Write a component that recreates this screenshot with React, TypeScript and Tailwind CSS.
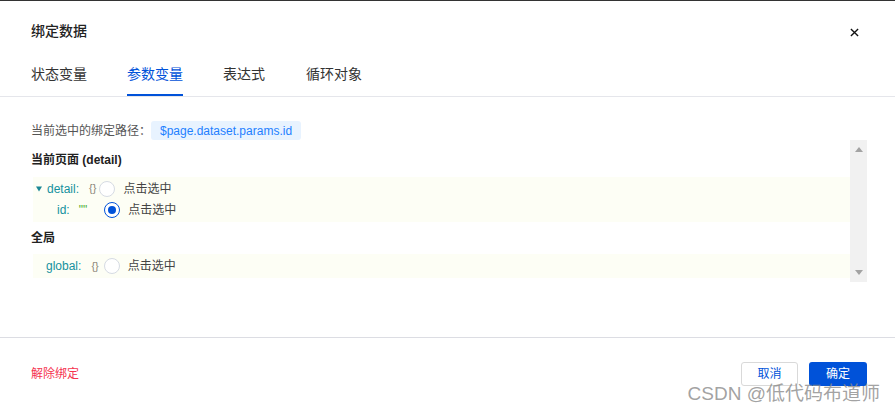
import React from "react";

const tabs = ["状态变量", "参数变量", "表达式", "循环对象"];

const Radio = ({ checked, className }: { checked?: boolean; className?: string }) => (
  <span
    className={`flex h-[16px] w-[16px] shrink-0 items-center justify-center rounded-full border bg-white ${
      checked ? "border-[#0052d9]" : "border-[#d6dbe3]"
    } ${className ?? ""}`}
  >
    {checked && <span className="h-[8px] w-[8px] rounded-full bg-[#0052d9]" />}
  </span>
);

const App = () => {
  return (
    <div
      className="relative h-[410px] w-[895px] overflow-hidden border-t border-[#333] bg-white text-[#333]"
      style={{ fontFamily: '"Liberation Sans", "Noto Sans CJK SC", sans-serif' }}
    >
      {/* header */}
      <div className="border-b border-[#e5e6eb] px-[31px]">
        <div className="flex h-[61px] items-center justify-between">
          <span className="text-[14px] font-medium text-[#222]">绑定数据</span>
          <svg width="9" height="9" viewBox="0 0 10 10" className="mr-[5px] mt-[1px]">
            <path d="M1 1L9 9M9 1L1 9" stroke="#111" strokeWidth="1.5" />
          </svg>
        </div>
        <div className="flex h-[34px] text-[14px] leading-[22px]">
          {tabs.map((t, i) => (
            <div
              key={t}
              className={`flex h-full flex-col justify-between pt-[1px] ${
                i === 1 ? "text-[#0052d9]" : "text-[#333]"
              } ${i === 2 ? "mr-[41px]" : "mr-[40px]"}`}
            >
              <span>{t}</span>
              <span className={`h-[2px] ${i === 1 ? "bg-[#0052d9]" : ""}`} />
            </div>
          ))}
        </div>
      </div>

      {/* body */}
      <div className="h-[240px] pl-[31px] pr-[28px] pt-[24px] text-[12px]">
        <div className="flex h-[19px] items-center">
          <span className="text-[#555]">当前选中的绑定路径：</span>
          <span className="flex h-[19px] w-[150px] items-center justify-center rounded-[3px] bg-[#e8f3ff] text-[12px] text-[#1e80ff]">
            $page.dataset.params.id
          </span>
        </div>

        <div className="flex h-[142px]">
          <div className="flex-1 pt-[11px]">
            <div className="h-[18px] font-bold leading-[18px] text-[#222]">当前页面 (detail)</div>
            <div className="ml-[2px] mt-[8px] h-[45px] bg-[#fdfef5] pl-[3px]">
              <div className="flex h-[22px] items-center pt-[1px]">
                <svg width="6" height="6" viewBox="0 0 6 6" className="mr-[5px] mt-[1px]">
                  <path d="M0 0.5H6L3 5.5Z" fill="#1b8795" />
                </svg>
                <span className="text-[#15919f]">detail:</span>
                <span className="ml-[10px] text-[11px] text-[#8a8578]">{"{}"}</span>
                <Radio className="ml-[3px]" />
                <span className="ml-[8px] text-[#444]">点击选中</span>
              </div>
              <div className="flex h-[22px] items-center pl-[21px]">
                <span className="text-[#15919f]">id:</span>
                <span className="ml-[9px] text-[#4caf35]">""</span>
                <Radio checked className="ml-[17px]" />
                <span className="ml-[8px] text-[#444]">点击选中</span>
              </div>
            </div>
            <div className="mt-[7px] h-[18px] font-bold leading-[18px] text-[#222]">全局</div>
            <div className="ml-[2px] mt-[7px] flex h-[24px] items-center bg-[#fdfef5] pl-[13px]">
              <span className="text-[#15919f]">global:</span>
              <span className="ml-[10px] text-[11px] text-[#8a8578]">{"{}"}</span>
              <Radio className="ml-[5px]" />
              <span className="ml-[8px] text-[#444]">点击选中</span>
            </div>
          </div>

          {/* scrollbar */}
          <div className="flex w-[17px] flex-col items-center justify-between bg-[#f1f1f1] py-[7px]">
            <svg width="8" height="5" viewBox="0 0 8 5">
              <path d="M0 5H8L4 0Z" fill="#a3a3a3" />
            </svg>
            <svg width="8" height="5" viewBox="0 0 8 5">
              <path d="M0 0H8L4 5Z" fill="#a3a3a3" />
            </svg>
          </div>
        </div>
      </div>

      {/* footer */}
      <div className="flex items-center justify-between border-t border-[#dcdde3] pl-[31px] pr-[28px] pt-[24px] text-[12px]">
        <span className="text-[#f5334f]">解除绑定</span>
        <div className="flex gap-[11px]">
          <button className="h-[24px] w-[57px] rounded-[3px] border border-[#d9d9d9] bg-white text-[#0052d9]">
            取消
          </button>
          <button className="h-[24px] w-[58px] rounded-[3px] bg-[#0052d9] text-white">确定</button>
        </div>
      </div>

      {/* watermark */}
      <div className="absolute bottom-[4px] right-[15px] text-[19px] leading-[24px] text-[#8a8a8a]/80">
        CSDN @低代码布道师
      </div>
    </div>
  );
};

export default App;
